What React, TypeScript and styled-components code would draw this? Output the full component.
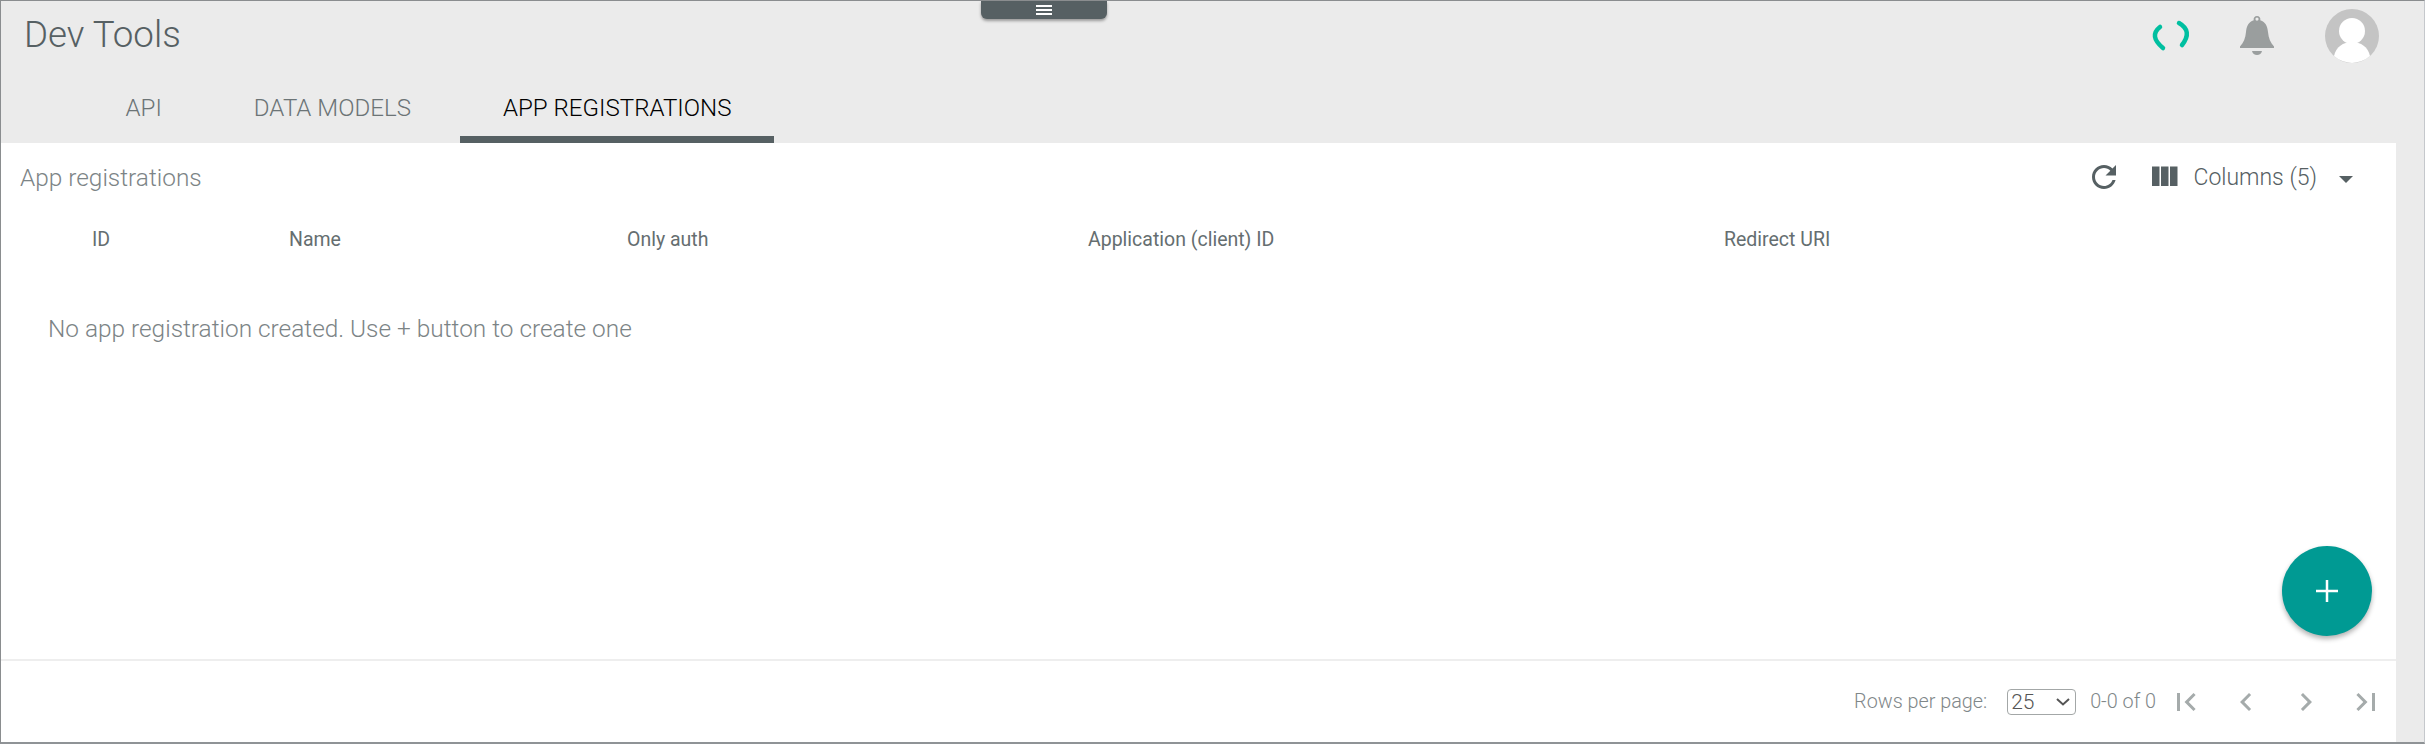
import React from 'react';
import styled, { createGlobalStyle } from 'styled-components';

const GlobalStyle = createGlobalStyle`
  html, body {
    margin: 0;
    padding: 0;
    background: #ebebeb;
    font-family: Roboto, "Liberation Sans", sans-serif;
  }
  * {
    box-sizing: border-box;
  }
`;

const Frame = styled.div`
  position: relative;
  display: flex;
  flex-direction: column;
  width: 2425px;
  height: 744px;
  overflow: hidden;
  background: #ebebeb;
  border-top: 1px solid #8a8d8f;
  border-left: 1px solid #8a8d8f;
  border-right: 1px solid #c5c8cc;
  border-bottom: 2px solid #8f9396;
`;

const MenuHandle = styled.div`
  position: absolute;
  top: 0;
  left: 980px;
  display: flex;
  align-items: center;
  justify-content: center;
  width: 126px;
  height: 18px;
  background: #566063;
  border-radius: 0 0 6px 6px;
  box-shadow: 0 2px 3px rgba(0, 0, 0, 0.35);
  color: #fff;
`;

const TopBar = styled.header`
  display: flex;
  align-items: center;
  justify-content: space-between;
  height: 70px;
  padding: 0 45px 0 23px;
`;

const PageTitle = styled.h1`
  margin: 0 0 3px;
  font-size: 36.7px;
  font-weight: 300;
  color: #566063;
`;

const TopActions = styled.div`
  display: flex;
  align-items: center;
`;

const Spinner = styled.svg`
  display: block;
  width: 40px;
  height: 40px;
  margin-right: 44px;
`;

const Bell = styled.svg`
  display: block;
  width: 44px;
  height: 44px;
  margin-right: 46px;
  color: #9a9e9e;
`;

const Avatar = styled.svg`
  display: block;
  width: 54px;
  height: 54px;
`;

const Tabs = styled.nav`
  display: flex;
  gap: 7px;
  height: 72px;
  padding-left: 82px;
`;

const Tab = styled.div<{ $active?: boolean }>`
  display: flex;
  align-items: flex-start;
  padding: 23px 42.500px 0;
  font-size: 24.1px;
  line-height: 28px;
  font-weight: 300;
  text-transform: uppercase;
  color: ${(p) => (p.$active ? '#000' : '#6c7476')};
  border-bottom: 7px solid ${(p) => (p.$active ? '#566063' : 'transparent')};
`;

const Panel = styled.main`
  position: relative;
  display: flex;
  flex: 1;
  flex-direction: column;
  width: 2395px;
  background: #fff;
`;

const Toolbar = styled.div`
  display: flex;
  align-items: center;
  justify-content: space-between;
  height: 68px;
  padding: 0 43px 0 19px;
`;

const PanelTitle = styled.h2`
  margin: 0;
  font-size: 24.4px;
  font-weight: 300;
  color: #7c8486;
`;

const ToolbarActions = styled.div`
  display: flex;
  align-items: center;
  color: #566063;
`;

const ToolIcon = styled.svg`
  display: block;
  width: 36px;
  height: 36px;
  fill: currentColor;
`;

const ColumnsButton = styled.div`
  display: flex;
  align-items: center;
  margin-left: 24px;
  font-size: 23px;
  font-weight: 300;
`;

const ColumnsLabel = styled.span`
  margin: 0 22px 0 11px;
`;

const Caret = styled.span`
  width: 0;
  height: 0;
  border-left: 7px solid transparent;
  border-right: 7px solid transparent;
  border-top: 7px solid #566063;
  margin-top: 4px;
`;

const HeadRow = styled.div`
  display: grid;
  grid-template-columns: 197px 338px 461px 636px 1fr;
  align-items: center;
  height: 56px;
  padding-left: 91px;
  font-size: 19.5px;
  color: #656e70;
`;

const EmptyNote = styled.p`
  flex: 1;
  margin: 0;
  padding: 47px 0 0 47px;
  font-size: 24.4px;
  line-height: 30px;
  font-weight: 300;
  color: #7c8486;
`;

const Fab = styled.div`
  position: absolute;
  left: 2281px;
  top: 403px;
  display: flex;
  align-items: center;
  justify-content: center;
  width: 90px;
  height: 90px;
  border-radius: 50%;
  background: #009a93;
  color: #fff;
  box-shadow: 0 3px 5px rgba(0, 0, 0, 0.3);
`;

const Footer = styled.footer`
  display: flex;
  align-items: center;
  justify-content: flex-end;
  height: 83px;
  border-top: 2px solid #eeeeee;
  font-size: 19.8px;
  font-weight: 300;
  color: #7f8789;
`;

const SelectWrap = styled.div`
  position: relative;
  width: 69px;
  height: 26px;
  margin: 0 14px 0 20px;
`;

const RowsSelect = styled.select`
  appearance: none;
  display: block;
  width: 100%;
  height: 100%;
  padding: 0 0 0 3px;
  background: #fff;
  border: 1px solid #a3a7a7;
  border-radius: 4px;
  font-family: Roboto, "Liberation Sans", sans-serif;
  font-size: 21px;
  font-weight: 300;
  color: #555;
`;

const SelectChevron = styled.svg`
  position: absolute;
  top: 9px;
  right: 6px;
  width: 14px;
  height: 8px;
  pointer-events: none;
`;

const PagerButtons = styled.div`
  display: flex;
`;

const PagerButton = styled.svg`
  display: block;
  width: 60px;
  height: 36px;
  fill: #a5abab;
`;

const pagerPaths = [
  'M18.41 16.59L13.83 12l4.58-4.59L17 6l-6 6 6 6 1.41-1.41zM6 6h2v12H6V6z',
  'M15.41 7.41L14 6l-6 6 6 6 1.41-1.41L10.83 12z',
  'M10 6L8.59 7.41 13.17 12l-4.58 4.59L10 18l6-6z',
  'M5.59 7.41L10.18 12l-4.59 4.59L7 18l6-6-6-6-1.41 1.41zM16 6h2v12h-2V6z',
];

const columns = ['ID', 'Name', 'Only auth', 'Application (client) ID', 'Redirect URI'];

export default function App() {
  return (
    <>
      <GlobalStyle />
      <Frame>
        <MenuHandle>
          <svg width="16" height="12" viewBox="0 0 16 12" fill="#fff">
            <rect y="1" width="16" height="2" />
            <rect y="5" width="16" height="2" />
            <rect y="9" width="16" height="2" />
          </svg>
        </MenuHandle>
        <TopBar>
          <PageTitle>Dev Tools</PageTitle>
          <TopActions>
            <Spinner viewBox="0 0 40 40" fill="none" stroke="#00bfa0" strokeWidth="4.5" strokeLinecap="round">
              <path d="M9 11 Q-2.500 20 12 32" />
              <path d="M28 7 Q42 15 31 29" />
            </Spinner>
            <Bell viewBox="0 0 44 44" fill="currentColor">
              <path
                fillRule="evenodd"
                d="M22 2a3.400 3.400 0 0 0-3.300 4.200C13.500 8 11.500 12 11 18c-.5 6-2.500 11-6 14.500V34h34v-1.500c-3.500-3.500-5.500-8.500-6-14.500-.5-6-2.500-10-7.700-11.800A3.400 3.400 0 0 0 22 2zm0 1.500a1.600 1.600 0 1 1 0 3.200 1.600 1.600 0 0 1 0-3.200z"
              />
              <path d="M17 37h10c-.5 2.500-2.500 4-5 4s-4.500-1.500-5-4z" />
            </Bell>
            <Avatar viewBox="0 0 54 54">
              <circle cx="27" cy="27" r="27" fill="#c4c4c4" />
              <circle cx="27" cy="22" r="13" fill="#fff" />
              <path d="M9 47c2-9 9-14 18-14s16 5 18 14a27 27 0 0 1-36 0z" fill="#fff" />
            </Avatar>
          </TopActions>
        </TopBar>
        <Tabs>
          <Tab>API</Tab>
          <Tab>Data models</Tab>
          <Tab $active>App registrations</Tab>
        </Tabs>
        <Panel>
          <Toolbar>
            <PanelTitle>App registrations</PanelTitle>
            <ToolbarActions>
              <ToolIcon viewBox="0 0 24 24">
                <path d="M17.65 6.35C16.2 4.9 14.21 4 12 4c-4.42 0-7.99 3.58-7.99 8s3.57 8 7.990 8c3.730 0 6.840-2.550 7.730-6h-2.080c-.82 2.330-3.040 4-5.650 4-3.310 0-6-2.690-6-6s2.690-6 6-6c1.660 0 3.140.69 4.220 1.780L13 11h7V4l-2.350 2.350z" />
              </ToolIcon>
              <ColumnsButton>
                <ToolIcon viewBox="0 0 24 24">
                  <path d="M10 18h5V5h-5v13zm-6 0h5V5H4v13zM16 5v13h5V5h-5z" />
                </ToolIcon>
                <ColumnsLabel>Columns (5)</ColumnsLabel>
                <Caret />
              </ColumnsButton>
            </ToolbarActions>
          </Toolbar>
          <HeadRow>
            {columns.map((c) => (
              <span key={c}>{c}</span>
            ))}
          </HeadRow>
          <EmptyNote>No app registration created. Use + button to create one</EmptyNote>
          <Fab>
            <svg width="24" height="24" viewBox="0 0 24 24" fill="#fff">
              <path d="M10.750 1h2.500v22h-2.500zM1 10.750h22v2.500H1z" />
            </svg>
          </Fab>
          <Footer>
            <span>Rows per page:</span>
            <SelectWrap>
              <RowsSelect defaultValue="25">
                <option value="25">25</option>
                <option value="50">50</option>
              </RowsSelect>
              <SelectChevron viewBox="0 0 14 8" fill="none" stroke="#555" strokeWidth="2">
                <path d="M1 1l6 5.500L13 1" />
              </SelectChevron>
            </SelectWrap>
            <span>0-0 of 0</span>
            <PagerButtons>
              {pagerPaths.map((d) => (
                <PagerButton key={d} viewBox="-6 0 36 24" preserveAspectRatio="xMidYMid meet">
                  <path d={d} />
                </PagerButton>
              ))}
            </PagerButtons>
          </Footer>
        </Panel>
      </Frame>
    </>
  );
}
